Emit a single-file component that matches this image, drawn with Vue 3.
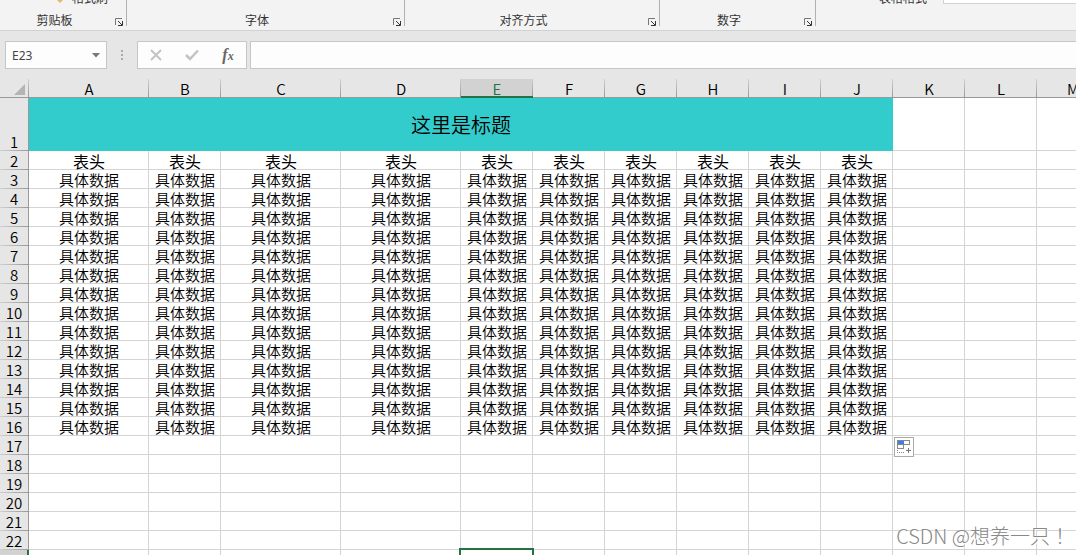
<script setup>
import { ref } from 'vue'

const groups = [
  { label: '剪贴板', size: 'clipboard', item: '格式刷' },
  { label: '字体', size: 'font' },
  { label: '对齐方式', size: 'align' },
  { label: '数字', size: 'number' },
]
const columns = [
  { name: 'A', wide: true },
  { name: 'B' },
  { name: 'C', wide: true },
  { name: 'D', wide: true },
  ...'EFGHIJKLM'.split('').map((name) => ({ name })),
]
const filled = 10
const rows = Array.from({ length: 22 }, (_, i) => i + 2)
const cellName = ref('E23')
const formula = ref('')

function cellText(row, index) {
  if (index >= filled || row > 16) return ''
  return row === 2 ? '表头' : '具体数据'
}
</script>

<template>
  <div class="app">
    <header class="ribbon">
      <section v-for="g in groups" :key="g.label" class="group" :class="g.size">
        <button v-if="g.item" class="painter">
          <svg width="12" height="12" viewBox="0 0 12 12" aria-hidden="true"><path d="M3 5h6v3L6 11 3 8z" fill="#e8b96a" /></svg>
          {{ g.item }}
        </button>
        <div class="group-foot">
          <span class="group-label">{{ g.label }}</span>
          <button class="launcher" :aria-label="g.label + '设置'">
            <svg width="9" height="9" viewBox="0 0 9 9" aria-hidden="true">
              <path d="M.5 7V.5H7" fill="none" stroke="#777" />
              <path d="M3 3l4 4" fill="none" stroke="#333" />
              <path d="M7.5 3v4.500H3" fill="none" stroke="#333" />
            </svg>
          </button>
        </div>
      </section>
      <section class="styles">
        <button class="format">表格格式</button>
        <div class="gallery"></div>
      </section>
    </header>

    <div class="formula-bar">
      <div class="name-box">
        <input v-model="cellName" aria-label="名称框" />
        <button aria-label="名称列表">
          <svg width="8" height="5" viewBox="0 0 8 5" aria-hidden="true"><path d="M0 0h8L4 4.500z" fill="#777" /></svg>
        </button>
      </div>
      <svg class="grip" width="2" height="10" viewBox="0 0 2 10" aria-hidden="true">
        <path d="M0 0h2v2H0zM0 4h2v2H0zM0 8h2v2H0z" fill="#aaa" />
      </svg>
      <div class="tools">
        <button aria-label="取消">
          <svg width="12" height="12" viewBox="0 0 12 12" aria-hidden="true"><path d="M1 1l10 10M11 1L1 11" stroke="#c3c3c3" stroke-width="2" /></svg>
        </button>
        <button aria-label="输入">
          <svg width="14" height="12" viewBox="0 0 14 12" aria-hidden="true"><path d="M1 6l4 4 8-8.500" fill="none" stroke="#c3c3c3" stroke-width="2.500" /></svg>
        </button>
        <button class="fx" aria-label="插入函数"><i>f</i><i class="x">x</i></button>
      </div>
      <input v-model="formula" class="formula" aria-label="编辑栏" />
    </div>

    <main class="sheet">
      <table>
        <colgroup>
          <col class="col-head" />
          <col v-for="c in columns" :key="c.name" :class="c.wide ? 'col-wide' : 'col-normal'" />
        </colgroup>
        <thead>
          <tr>
            <th class="corner" aria-label="全选">
              <svg width="11" height="11" viewBox="0 0 11 11" aria-hidden="true"><path d="M11 0v11H0z" fill="#b4b4b4" /></svg>
            </th>
            <th v-for="c in columns" :key="c.name" scope="col" :class="{ active: c.name === 'E' }">{{ c.name }}</th>
          </tr>
        </thead>
        <tbody>
          <tr class="title-row">
            <th scope="row">1</th>
            <td class="title" :colspan="filled">这里是标题</td>
            <td v-for="n in 3" :key="n"></td>
          </tr>
          <tr v-for="r in rows" :key="r" :class="{ heading: r === 2 }">
            <th scope="row" :class="{ active: r === 23 }">{{ r < 23 ? r : '' }}</th>
            <td v-for="(c, i) in columns" :key="c.name" :class="{ selected: c.name + r === 'E23' }">
              {{ cellText(r, i) }}
              <button v-if="c.name + r === 'K17'" class="fill-options" aria-label="自动填充选项">
                <svg width="18" height="18" viewBox="0 0 18 18" shape-rendering="crispEdges" aria-hidden="true">
                  <path d="M2.500 2.500h12v4h-12zM2.500 6.500h6v4h-6z" fill="#fff" stroke="#888" />
                  <path d="M3 3h6v3H3z" fill="#3c7df0" />
                  <path d="M2 14h1v1H2zM4 14h1v1H4zM6 14h1v1H6zM8 14h1v1H8zM2 12h1v1H2z" fill="#888" />
                  <path d="M13.500 10v5M11 12.500h5" stroke="#777" />
                </svg>
              </button>
            </td>
          </tr>
        </tbody>
      </table>
    </main>
    <div class="watermark">CSDN @想养一只！</div>
  </div>
</template>

<style>
body {
  margin: 0;
}
</style>

<style scoped>
.app {
  position: relative;
  height: 100vh;
  overflow: hidden;
  background: #e6e6e6;
  color: #000;
  font-family: "Noto Sans CJK SC", sans-serif;
}
button,
input {
  box-sizing: border-box;
  margin: 0;
  padding: 0;
  border: 0;
  background: none;
  color: inherit;
  font: inherit;
}
svg {
  display: block;
}
.ribbon {
  display: flex;
  height: 30px;
  overflow: hidden;
  background: #f3f3f3;
  border-bottom: 1px solid #d2d2d2;
  color: #333;
  font-size: 12px;
  line-height: 18px;
}
.group {
  position: relative;
  display: flex;
  flex-direction: column;
  justify-content: flex-end;
  flex: none;
}
.group::after {
  content: "";
  position: absolute;
  top: 0;
  right: 0;
  bottom: 4px;
  width: 1px;
  background: #b1b1b1;
}
.clipboard { width: 127px; }
.font { width: 278px; }
.align { width: 255px; }
.number { width: 156px; }
.painter {
  display: flex;
  align-items: center;
  gap: 6px;
  margin: 0 0 4px 54px;
}
.group-foot {
  display: flex;
  align-items: center;
  padding: 0 3px 1px 0;
}
.group-label {
  flex: 1;
  text-align: center;
}
.launcher {
  padding: 5px 0 1px;
  width: 9px;
  margin-left: 6px;
}
.styles {
  display: flex;
  align-items: flex-start;
  flex: 1;
  gap: 16px;
  padding-left: 63px;
}
.format {
  margin-top: -11px;
  white-space: nowrap;
}
.gallery {
  flex: 1;
  height: 3px;
  background: #fff;
  border-left: 1px solid #d2d2d2;
  border-bottom: 1px solid #d2d2d2;
}
.formula-bar {
  display: flex;
  align-items: center;
  padding: 10px 0 10px 5px;
}
.name-box,
.tools,
.formula {
  box-sizing: border-box;
  height: 28px;
  border: 1px solid #c6c6c6;
  background: #fdfdfd;
}
.name-box {
  display: flex;
  flex: none;
  width: 102px;
  color: #444;
  font-family: "Noto Sans", sans-serif;
  font-size: 12px;
}
.name-box input {
  flex: 1;
  min-width: 0;
  padding-left: 6px;
}
.name-box button {
  display: flex;
  align-items: center;
  justify-content: center;
  width: 20px;
}
.grip {
  margin: 0 14px;
}
.tools {
  display: flex;
  flex: none;
  width: 110px;
  margin-right: 3px;
}
.tools button {
  display: flex;
  flex: 1;
  align-items: center;
  justify-content: center;
}
.tools .fx {
  color: #666;
  font-family: "Liberation Serif", serif;
  font-size: 16px;
  font-weight: bold;
  line-height: 16px;
}
.fx .x {
  padding-top: 2px;
  font-size: 12px;
}
.formula {
  flex: 1;
  min-width: 0;
  padding: 0 6px;
  border-right: 0;
  font-size: 13px;
}
table {
  table-layout: fixed;
  width: 0;
  border-spacing: 0;
  background: #fff;
  font-size: 15px;
  font-weight: 350;
  line-height: 16px;
}
.col-head { width: 29px; }
.col-wide { width: 120px; }
.col-normal { width: 72px; }
th,
td {
  box-sizing: border-box;
  height: 19px;
  padding: 2px 0 0;
  text-align: center;
  white-space: nowrap;
}
th {
  font-weight: 350;
  color: #000;
}
td {
  position: relative;
  padding-left: 1px;
  border-right: 1px solid #d4d4d4;
  border-bottom: 1px solid #d4d4d4;
}
thead th {
  border-bottom: 1px solid #999;
  background: linear-gradient(#d0d0d0, #999) right / 1px 100% no-repeat #e6e6e6;
}
thead th.active {
  border-bottom: 2px solid #217346;
  background-color: #d2d2d2;
  color: #217346;
  line-height: 15px;
}
thead .corner svg {
  margin: 0 0 0 14px;
}
tbody th {
  border-right: 1px solid #999;
  background: linear-gradient(90deg, #d0d0d0, #999) bottom / 100% 1px no-repeat #e6e6e6;
  padding-bottom: 1px;
}
tbody th.active {
  border-right: 2px solid #217346;
  background-color: #d2d2d2;
  color: #217346;
}
.title-row th {
  height: 53px;
  vertical-align: bottom;
}
.title-row .title {
  border-color: #33cccc;
  background: #33cccc;
  font-size: 20px;
}
.heading td {
  font-size: 16px;
  font-weight: 400;
}
.selected::after {
  content: "";
  position: absolute;
  inset: -2px;
  border: 2px solid #217346;
}
.fill-options {
  position: absolute;
  top: 1px;
  left: 1px;
  width: 20px;
  height: 20px;
  border: 1px solid #ababab;
  background: #fff;
}
.watermark {
  position: absolute;
  right: 6px;
  bottom: 5px;
  color: #888;
  font-family: "Noto Sans CJK TC", sans-serif;
  font-size: 20px;
  font-weight: 300;
  line-height: 28px;
  text-shadow: 1px 1px 0 #fff;
}
</style>
